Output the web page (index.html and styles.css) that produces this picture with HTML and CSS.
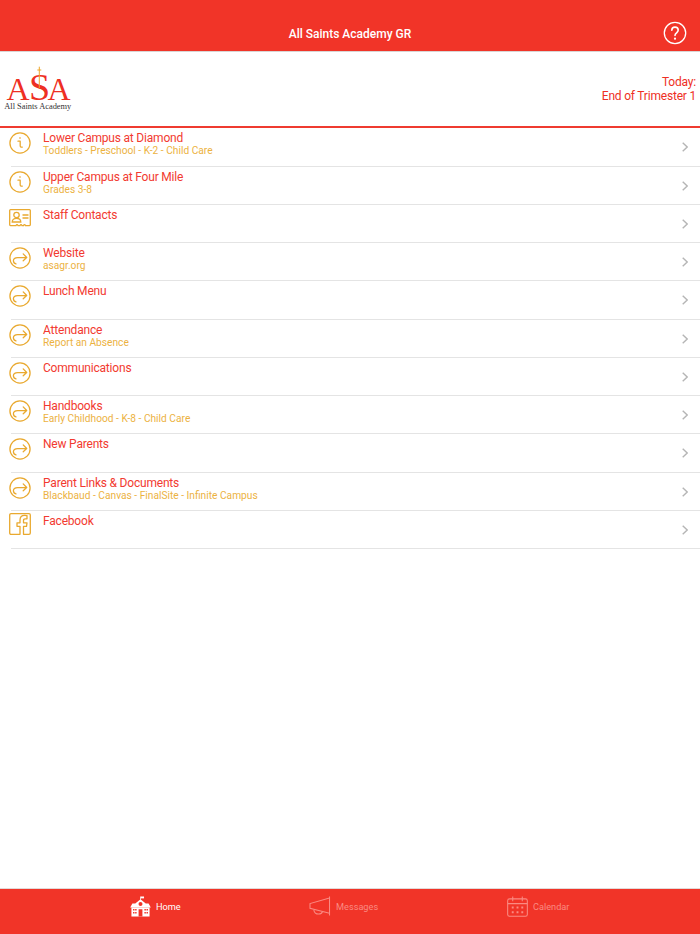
FILE: index.html
```html
<!DOCTYPE html>
<html lang="en">
<head>
<meta charset="utf-8">
<title>All Saints Academy GR</title>
<link rel="stylesheet" href="styles.css">
</head>
<body>
<svg class="defs" width="0" height="0" aria-hidden="true">
  <symbol id="i-info" viewBox="0 0 24 24"><circle cx="12" cy="12" r="11" fill="none" stroke="currentColor" stroke-width="1.400"/><path d="M12 6.200v.7M9.800 10h2.400v5c0 1.300.8 1.700 2.300 1.400" fill="none" stroke="currentColor" stroke-width="1.400" stroke-linecap="round" stroke-linejoin="round"/></symbol>
  <symbol id="i-link" viewBox="0 0 24 24"><circle cx="12" cy="12" r="11" fill="none" stroke="currentColor" stroke-width="1.400"/><path d="M19.300 11.500H9.500C6.500 11.500 4.800 13 4.800 15c0 1.800 1.200 3 2.800 3.500M15.500 7.500l3.800 4-3.800 3.500" fill="none" stroke="currentColor" stroke-width="1.400" stroke-linecap="round" stroke-linejoin="round"/></symbol>
</svg>

<header class="topbar">
  <h1 class="topbar-title">All Saints Academy GR</h1>
  <svg class="help" viewBox="0 0 24 24"><circle cx="12" cy="12" r="10.700" fill="none" stroke="#fff" stroke-width="1.300"/><path d="M8.800 9.300c0-2 1.400-3.200 3.200-3.200s3.200 1.200 3.200 3c0 2.700-3.200 2.700-3.200 5.400" fill="none" stroke="#fff" stroke-width="1.600" stroke-linecap="round"/><circle cx="12" cy="17.700" r="1.100" fill="#fff"/></svg>
</header>

<section class="banner">
  <svg class="logo" viewBox="0 0 68 46" role="img" aria-label="All Saints Academy logo">
    <text class="logo-a" x="2.500" y="34">A</text>
    <text class="logo-s" x="24.900" y="34">S</text>
    <text class="logo-a" x="43.500" y="34">A</text>
    <path class="logo-cross" d="M35.300 .7V22M33.300 4h4"/>
    <text class="logo-name" x=".3" y="43" textLength="67" lengthAdjust="spacingAndGlyphs">All Saints Academy</text>
  </svg>
  <div class="today">Today:<br>End of Trimester 1</div>
</section>

<ul class="list">
  <li class="row">
    <svg class="icon icon-round"><use href="#i-info"/></svg>
    <div class="row-text"><div class="row-title">Lower Campus at Diamond</div><div class="row-sub">Toddlers - Preschool - K-2 - Child Care</div></div>
    <svg class="chev" viewBox="0 0 6 10"><path d="M.7.7L5.200 5 .7 9.300"/></svg>
  </li>
  <li class="row">
    <svg class="icon icon-round"><use href="#i-info"/></svg>
    <div class="row-text"><div class="row-title">Upper Campus at Four Mile</div><div class="row-sub">Grades 3-8</div></div>
    <svg class="chev" viewBox="0 0 6 10"><path d="M.7.7L5.200 5 .7 9.300"/></svg>
  </li>
  <li class="row">
    <svg class="icon icon-card" viewBox="0 0 22 18"><path d="M1.500.7h19a.8.8 0 0 1 .8.8v14.300a.8.8 0 0 1-.8.8h-4c-.5-1.400-1.500-1.400-2 0h-1.500c-.5-1.400-1.500-1.400-2 0H9c-.5-1.400-1.500-1.400-2 0H1.500a.8.8 0 0 1-.8-.8V1.500a.8.8 0 0 1 .8-.8z" fill="none" stroke="currentColor" stroke-width="1.300"/><circle cx="7.500" cy="6" r="2.700" fill="none" stroke="currentColor" stroke-width="1.300"/><path d="M3.200 13c0-2.600 1.900-3.700 4.300-3.700s4.300 1.100 4.300 3.700zM13.500 6h6M13.500 9h6" fill="none" stroke="currentColor" stroke-width="1.300"/></svg>
    <div class="row-text"><div class="row-title">Staff Contacts</div></div>
    <svg class="chev" viewBox="0 0 6 10"><path d="M.7.7L5.200 5 .7 9.300"/></svg>
  </li>
  <li class="row">
    <svg class="icon icon-round"><use href="#i-link"/></svg>
    <div class="row-text"><div class="row-title">Website</div><div class="row-sub">asagr.org</div></div>
    <svg class="chev" viewBox="0 0 6 10"><path d="M.7.7L5.200 5 .7 9.300"/></svg>
  </li>
  <li class="row">
    <svg class="icon icon-round"><use href="#i-link"/></svg>
    <div class="row-text"><div class="row-title">Lunch Menu</div></div>
    <svg class="chev" viewBox="0 0 6 10"><path d="M.7.7L5.200 5 .7 9.300"/></svg>
  </li>
  <li class="row">
    <svg class="icon icon-round"><use href="#i-link"/></svg>
    <div class="row-text"><div class="row-title">Attendance</div><div class="row-sub">Report an Absence</div></div>
    <svg class="chev" viewBox="0 0 6 10"><path d="M.7.7L5.200 5 .7 9.300"/></svg>
  </li>
  <li class="row">
    <svg class="icon icon-round"><use href="#i-link"/></svg>
    <div class="row-text"><div class="row-title">Communications</div></div>
    <svg class="chev" viewBox="0 0 6 10"><path d="M.7.7L5.200 5 .7 9.300"/></svg>
  </li>
  <li class="row">
    <svg class="icon icon-round"><use href="#i-link"/></svg>
    <div class="row-text"><div class="row-title">Handbooks</div><div class="row-sub">Early Childhood - K-8 - Child Care</div></div>
    <svg class="chev" viewBox="0 0 6 10"><path d="M.7.7L5.200 5 .7 9.300"/></svg>
  </li>
  <li class="row">
    <svg class="icon icon-round"><use href="#i-link"/></svg>
    <div class="row-text"><div class="row-title">New Parents</div></div>
    <svg class="chev" viewBox="0 0 6 10"><path d="M.7.7L5.200 5 .7 9.300"/></svg>
  </li>
  <li class="row">
    <svg class="icon icon-round"><use href="#i-link"/></svg>
    <div class="row-text"><div class="row-title">Parent Links &amp; Documents</div><div class="row-sub">Blackbaud - Canvas - FinalSite - Infinite Campus</div></div>
    <svg class="chev" viewBox="0 0 6 10"><path d="M.7.7L5.200 5 .7 9.300"/></svg>
  </li>
  <li class="row">
    <svg class="icon icon-fb" viewBox="0 0 22 22"><path d="M2 .7h18a1.300 1.300 0 0 1 1.300 1.300v18a1.300 1.300 0 0 1-1.300 1.300h-5.500v-8h3l.5-3.500h-3.500V7.500c0-1 .5-1.700 1.800-1.700H18V2.600c-.8-.1-1.500-.2-2.300-.2-2.800 0-4.700 1.700-4.700 4.800v2.600H8v3.500h3v8H2A1.300 1.300 0 0 1 .7 20V2A1.300 1.300 0 0 1 2 .7z" fill="none" stroke="currentColor" stroke-width="1.300" stroke-linejoin="round"/></svg>
    <div class="row-text"><div class="row-title">Facebook</div></div>
    <svg class="chev" viewBox="0 0 6 10"><path d="M.7.7L5.200 5 .7 9.300"/></svg>
  </li>
</ul>

<nav class="tabbar">
  <div class="tab tab-home">
    <svg class="tab-icon-home" viewBox="0 0 22 22"><path d="M10.600 .5h.8V4h-.8z" fill="#fff"/><path d="M11.400 .5h3.300v2h-3.300z" fill="#fff"/><path d="M11 3.500l5.500 4.300h3L21.800 12H.2l2.300-4.200h3z" fill="#fff"/><path d="M1.500 12h19v9.500h-19z" fill="#fff"/><circle cx="11" cy="8.300" r="2.100" fill="#f13428"/><path d="M9 21.500v-7.500h4v7.500zM3.200 13.700h1.500v1.600H3.200zM5.400 13.700h1.500v1.600H5.400zM3.200 16.700h1.500v1.600H3.200zM5.400 16.700h1.500v1.600H5.400zM15.100 13.700h1.500v1.600h-1.500zM17.300 13.700h1.500v1.600h-1.500zM15.100 16.700h1.500v1.600h-1.500zM17.300 16.700h1.500v1.600h-1.500z" fill="#f13428"/></svg>
    <span class="tab-label tab-label-on">Home</span>
  </div>
  <div class="tab tab-msg">
    <svg class="tab-icon-msg" viewBox="0 0 23 21"><path d="M21.500 .5v20M21.500 2L1 8v5l20.500 5M5 14.500c.5 3 2.500 4.500 5 4.500 2 0 3.500-1 4-2.500" fill="none" stroke="#fa8a82" stroke-width="1.100"/></svg>
    <span class="tab-label">Messages</span>
  </div>
  <div class="tab tab-cal">
    <svg class="tab-icon-cal" viewBox="0 0 22 22"><rect x=".7" y="3" width="20.600" height="18.300" rx="2" fill="none" stroke="#fa8a82" stroke-width="1.100"/><path d="M.7 8h20.600M6 .5v5M16 .5v5" stroke="#fa8a82" stroke-width="1.100" fill="none"/><path d="M5 11h2v2H5zM10 11h2v2h-2zM15 11h2v2h-2zM5 16h2v2H5zM10 16h2v2h-2zM15 16h2v2h-2z" fill="#fa8a82"/></svg>
    <span class="tab-label">Calendar</span>
  </div>
</nav>
</body>
</html>
```

FILE: styles.css
```css
* { box-sizing: border-box; }
html, body { margin: 0; padding: 0; }
body {
  width: 700px;
  height: 934px;
  display: flex;
  flex-direction: column;
  background: #fff;
  font-family: Roboto, "Liberation Sans", sans-serif;
  overflow: hidden;
}
.defs { position: absolute; }

.topbar {
  height: 52px;
  flex: none;
  background: #f13428;
  border-bottom: 1px solid #d9d5d4;
  display: flex;
  align-items: center;
  justify-content: center;
  position: relative;
}
.topbar-title {
  margin: 17px 0 0;
  font-size: 12px;
  line-height: 15px;
  font-weight: 500;
  color: #fff;
}
.help {
  position: absolute;
  right: 13px;
  top: 21px;
  width: 24px;
  height: 24px;
}

.banner {
  height: 76.250px;
  flex: none;
  border-bottom: 2px solid #ef3b30;
  display: flex;
  justify-content: space-between;
  align-items: center;
  padding: 0 4px;
}
.logo { width: 68px; height: 46px; flex: none; }
.logo-a, .logo-s {
  font-family: "Liberation Serif", serif;
  fill: #ee2f24;
}
.logo-a { font-size: 32px; }
.logo-s { font-size: 38px; }
.logo-cross { fill: none; stroke: #eda62a; stroke-width: 1; }
.logo-name {
  font-family: "Liberation Serif", serif;
  font-size: 8.600px;
  fill: #333;
}
.today {
  font-size: 12px;
  letter-spacing: -.2px;
  line-height: 14px;
  color: #ee2f24;
  text-align: right;
}

.list { list-style: none; margin: 0; padding: 0; }
.row {
  height: 38.250px;
  margin-left: 11px;
  display: flex;
  align-items: flex-start;
  border-bottom: 1px solid #e4e4e4;
}
.icon { color: #e9a92f; flex: none; margin-left: -2.500px; }
.icon-round { width: 22px; height: 22px; margin-top: 4px; }
.icon-card { width: 22px; height: 18px; margin-top: 4px; }
.icon-fb { width: 22px; height: 22px; margin-top: 2px; }
.row-text { margin-left: 12.500px; padding-top: 3px; flex: 1; min-width: 0; }
.row-title {
  font-size: 12px;
  letter-spacing: -.2px;
  line-height: 15px;
  color: #f23a30;
}
.row-sub {
  font-size: 10.200px;
  line-height: 11px;
  margin-top: -1px;
  color: #ecb23f;
}
.chev {
  width: 6px;
  height: 10px;
  flex: none;
  margin: 14px 12px 0 0;
  fill: none;
  stroke: #b5b5b5;
  stroke-width: 1.400;
}

.tabbar {
  margin-top: auto;
  height: 46px;
  flex: none;
  background: #f13428;
  border-top: 1px solid #e3d9d8;
  position: relative;
}
.tab { display: flex; align-items: center; gap: 5px; position: absolute; top: 7px; }
.tab-home { left: 130px; }
.tab-msg { left: 309px; }
.tab-cal { left: 507px; }
.tab-icon-home { width: 21px; height: 21px; }
.tab-icon-msg { width: 22px; height: 20px; }
.tab-icon-cal { width: 21px; height: 21px; }
.tab-label { font-size: 9.200px; color: #fa8a82; }
.tab-label-on { color: #fff; }
```
